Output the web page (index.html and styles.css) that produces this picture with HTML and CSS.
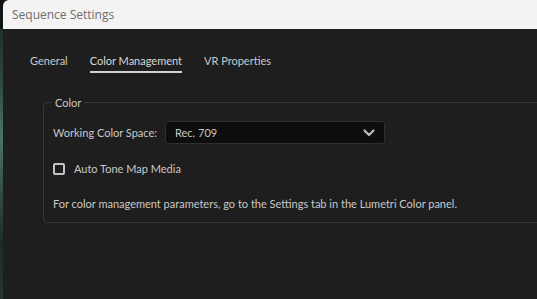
FILE: index.html
```html
<!DOCTYPE html>
<html>
<head>
<meta charset="utf-8">
<link rel="stylesheet" href="styles.css">
</head>
<body>
<div class="screen">
  <div class="strip"></div>
  <div class="dialog">
    <div class="titlebar">Sequence Settings</div>
    <div class="content">
      <nav class="tabs">
        <span class="tab">General</span>
        <span class="tab active">Color Management</span>
        <span class="tab">VR Properties</span>
      </nav>
      <fieldset class="group">
        <legend>Color</legend>
        <div class="row">
          <label class="label">Working Color Space:</label>
          <div class="select">
            <span>Rec. 709</span>
            <svg class="chev" width="12" height="8" viewBox="0 0 12 8"><path d="M1.5 1.5 L6 6 L10.5 1.5" fill="none" stroke="#bdbdbd" stroke-width="2.2" stroke-linecap="round" stroke-linejoin="round"/></svg>
          </div>
        </div>
        <div class="row check">
          <span class="box"></span>
          <span>Auto Tone Map Media</span>
        </div>
        <p class="info">For color management parameters, go to the Settings tab in the Lumetri Color panel.</p>
      </fieldset>
    </div>
  </div>
</div>
</body>
</html>
```
FILE: styles.css
```css
html, body {
  margin: 0;
  padding: 0;
  background: #1e1e1e;
  width: 537px;
  height: 299px;
  overflow: hidden;
}
.screen {
  display: flex;
  width: 537px;
  height: 299px;
  background: #0f1514;
}
.strip {
  width: 3px;
  flex: none;
  margin-top: 29px;
  background: linear-gradient(180deg, #1f302c 0%, #2f4842 20%, #4a756c 40%, #34503f 60%, #1d2a26 80%, #2a3532 100%);
}
.dialog {
  flex: 1;
  display: flex;
  flex-direction: column;
  overflow: hidden;
  background: #1e1e1e;
  border-top-left-radius: 6px;
}
.titlebar {
  height: 29px;
  flex: none;
  background: #f3f3f3;
  color: #6e6e6e;
  font-family: "Open Sans", "Noto Sans", sans-serif;
  font-size: 12px;
  line-height: 29px;
  padding-left: 9px;
}
.content {
  flex: 1;
  font-family: "Lato", "Noto Sans", sans-serif;
  font-size: 11px;
  color: #c8c8c8;
}
.tabs {
  display: flex;
  gap: 22px;
  padding: 24px 0 0 27px;
  height: 20px;
}
.tab {
  height: 18px;
  line-height: 16px;
}
.tab.active {
  border-bottom: 2px solid #d2d2d2;
  color: #d8d8d8;
}
.group {
  margin: 23px -20px 0 40px;
  padding: 12px 0 12px 9px;
  border: 1px solid #363636;
  border-radius: 4px;
  min-width: 0;
}
.group legend {
  padding: 0 3px;
  margin-left: -1px;
  color: #c8c8c8;
  font-size: 11px;
}
.row {
  display: flex;
  align-items: center;
}
.label {
  width: 112px;
}
.select {
  width: 200px;
  height: 21px;
  background: #0e0e0e;
  border: 1px solid #2f2f2f;
  border-radius: 3px;
  display: flex;
  align-items: center;
  justify-content: space-between;
  padding: 0 9px 0 9px;
}
.chev { display: block; }
.check {
  margin-top: 18px;
  gap: 9px;
}
.box {
  width: 8px;
  height: 8px;
  border: 2px solid #c4c4c4;
  border-radius: 2px;
}
.info {
  margin: 22px 0 0 0;
}
```
